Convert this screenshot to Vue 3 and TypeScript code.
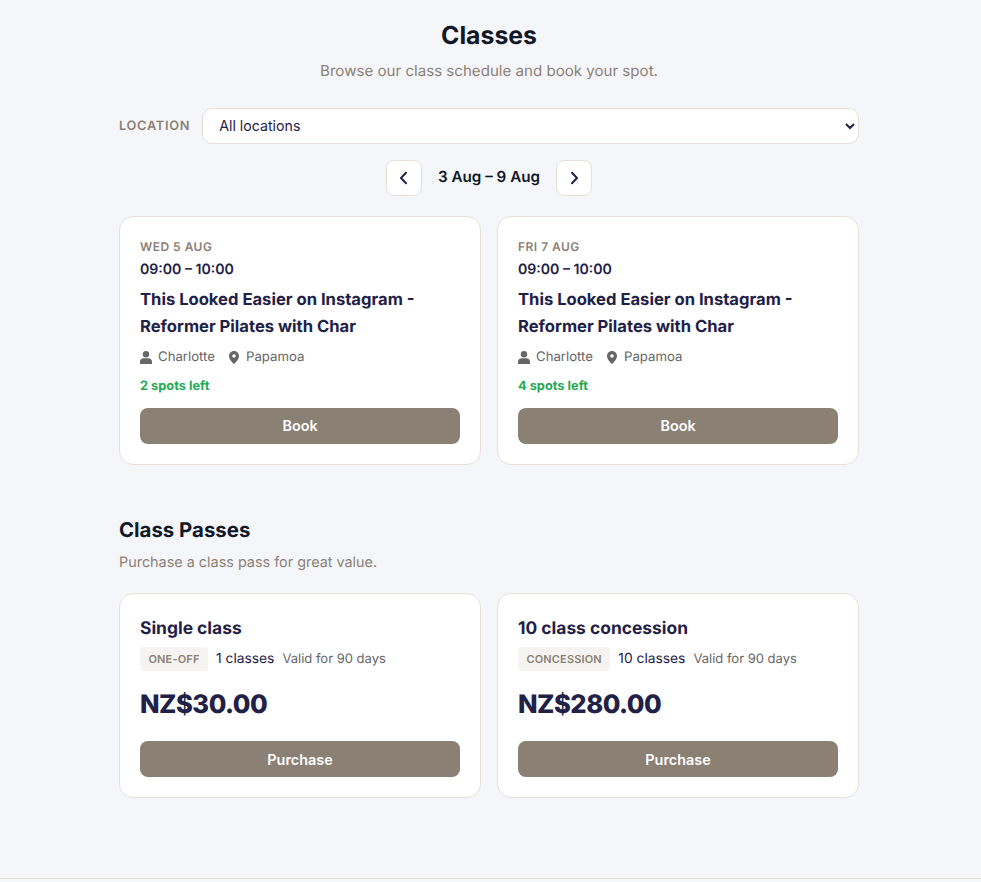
<script setup lang="ts">
interface ClassItem { id: number; day: string; spots: string }
interface PassItem { id: number; name: string; tag: string; classes: string; price: string }
const classes: ClassItem[] = [
  { id: 1, day: 'WED 5 AUG', spots: '2 spots left' },
  { id: 2, day: 'FRI 7 AUG', spots: '4 spots left' },
]
const passes: PassItem[] = [
  { id: 1, name: 'Single class', tag: 'ONE-OFF', classes: '1 classes', price: 'NZ$30.00' },
  { id: 2, name: '10 class concession', tag: 'CONCESSION', classes: '10 classes', price: 'NZ$280.00' },
]
</script>

<template>
  <div class="page">
    <div class="body">
    <main class="wrap">
      <header class="head">
        <h1>Classes</h1>
        <p>Browse our class schedule and book your spot.</p>
      </header>

      <div class="filter">
        <label for="loc">LOCATION</label>
        <select id="loc"><option>All locations</option></select>
      </div>

      <div class="week">
        <button class="nav" aria-label="Previous week">
          <svg width="16" height="16" viewBox="0 0 16 16"><path d="M10 2.800 5 8l5 5.200" /></svg>
        </button>
        <span class="range">3 Aug – 9 Aug</span>
        <button class="nav" aria-label="Next week">
          <svg width="16" height="16" viewBox="0 0 16 16"><path d="M6 2.800 11 8l-5 5.200" /></svg>
        </button>
      </div>

      <section class="grid">
        <article v-for="c in classes" :key="c.id" class="card">
          <div class="day">{{ c.day }}</div>
          <div class="time">09:00 – 10:00</div>
          <h3 class="title">This Looked Easier on Instagram - Reformer Pilates with Char</h3>
          <div class="meta">
            <span class="mi">
              <svg width="12" height="13" viewBox="0 0 12 13"><circle cx="6" cy="3.200" r="3.200" /><path d="M0 13v-2.200C0 8.600 1.600 7.200 3.400 7.200h5.200c1.800 0 3.400 1.400 3.400 3.600V13z" /></svg>
              Charlotte
            </span>
            <span class="mi pin">
              <svg width="10" height="13" viewBox="0 0 10 13"><path fill-rule="evenodd" d="M5 0C2.200 0 0 2.200 0 5c0 3.200 3.600 6.900 5 8 1.400-1.100 5-4.800 5-8 0-2.800-2.200-5-5-5zm0 3.200a1.800 1.800 0 1 1 0 3.600 1.800 1.800 0 0 1 0-3.600z" /></svg>
              Papamoa
            </span>
          </div>
          <div class="spots">{{ c.spots }}</div>
          <button class="cta">Book</button>
        </article>
      </section>

      <section class="passes">
        <h2>Class Passes</h2>
        <p class="sub">Purchase a class pass for great value.</p>
        <div class="grid">
          <article v-for="p in passes" :key="p.id" class="card pass">
            <h3 class="pname">{{ p.name }}</h3>
            <div class="info">
              <span class="tag">{{ p.tag }}</span>
              <span class="count">{{ p.classes }}</span>
              <span class="valid">Valid for 90 days</span>
            </div>
            <div class="price">{{ p.price }}</div>
            <button class="cta">Purchase</button>
          </article>
        </div>
      </section>
    </main>
    </div>
    <footer class="foot"></footer>
  </div>
</template>

<style>
html, body { margin: 0; background: #f5f6fa; }
</style>

<style scoped>
* { box-sizing: border-box; }
.page {
  min-height: 882px;
  background: #f5f6fa;
  font-family: Inter, "Liberation Sans", sans-serif;
  color: #1f2147;
  text-rendering: geometricPrecision;
}
.body { padding-right: 3px; }
.wrap { width: 740px; margin: 0 auto; padding: 16px 0 80px; }
.foot { border-top: 1px solid #e8e0d5; height: 3px; }
.head { text-align: center; margin-bottom: 26px; }
h1 { margin: 0 0 6px; font-size: 24.8px; line-height: 38px; font-weight: 700; color: #111827; }
.head p { margin: 0; font-size: 15.1px; line-height: 22px; color: #8b8074; }
.filter { display: flex; align-items: center; gap: 12px; margin-bottom: 16px; }
label { font-size: 12.8px; font-weight: 600; letter-spacing: 0.7px; color: #8b8074; white-space: nowrap; }
select {
  flex: 1; height: 36px; padding: 0 12px 1px; background: #fff;
  border: 1px solid #e8e0d5; border-radius: 10px;
  font-family: inherit; font-size: 14.2px; color: #1f2147;
}
.week { display: flex; justify-content: center; align-items: center; gap: 16px; margin-bottom: 20px; }
.nav {
  width: 36px; height: 36px; padding: 0; display: flex; align-items: center; justify-content: center;
  background: #fff; border: 1px solid #e8e0d5; border-radius: 8px;
}
.nav svg path { fill: none; stroke: #1f2147; stroke-width: 2; stroke-linecap: round; stroke-linejoin: round; }
.range { font-size: 15.2px; font-weight: 600; color: #111827; padding-bottom: 3px; }
.grid { display: grid; grid-template-columns: 1fr 1fr; gap: 16px; }
.card { background: #fff; border: 1px solid #e8e0d5; border-radius: 14px; padding: 20px; }
.day { font-size: 12px; line-height: 18px; font-weight: 600; letter-spacing: 0.48px; color: #8b8074; margin-top: 1px; }
.time { font-size: 14.1px; line-height: 22px; font-weight: 600; margin-top: 3px; }
.title { margin: 6px 0 0; font-size: 16.6px; line-height: 27px; font-weight: 700; }
.meta { display: flex; gap: 14px; margin-top: 7px; font-size: 13.2px; line-height: 19px; color: #666; }
.mi { display: flex; align-items: center; gap: 6px; }
.pin { gap: 7px; }
.mi svg { fill: #666; }
.spots { margin-top: 11px; font-size: 12.8px; line-height: 17px; font-weight: 700; color: #1faa52; }
.cta {
  display: block; width: 100%; height: 36px; margin-top: 13px; border: 0; border-radius: 8px; padding: 0 0 1px;
  background: #8b8074; color: #fff; font-family: inherit; font-size: 14.4px; font-weight: 600;
}
.passes { margin-top: 48px; }
h2 { margin: 0; font-size: 20.4px; line-height: 34px; font-weight: 700; color: #111827; }
.sub { margin: 5px 0 20px; font-size: 14.4px; line-height: 21px; color: #8b8074; }
.pname { margin: 1px 0 0; font-size: 17.4px; line-height: 27px; font-weight: 700; }
.info { display: flex; align-items: center; margin-top: 5px; }
.tag {
  background: #f5f4f2; color: #8b8074; border-radius: 4px; padding: 0 8.500px;
  font-size: 11px; line-height: 24px; font-weight: 600; letter-spacing: 0.15px; margin-right: 8px;
}
.count { font-size: 13.8px; margin-right: 8px; padding-bottom: 1px; }
.valid { font-size: 13px; color: #666; }
.price { margin-top: 15px; font-size: 25.6px; line-height: 38px; font-weight: 800; letter-spacing: -0.5px; }
.pass .cta { margin-top: 17px; padding: 0; }
</style>
